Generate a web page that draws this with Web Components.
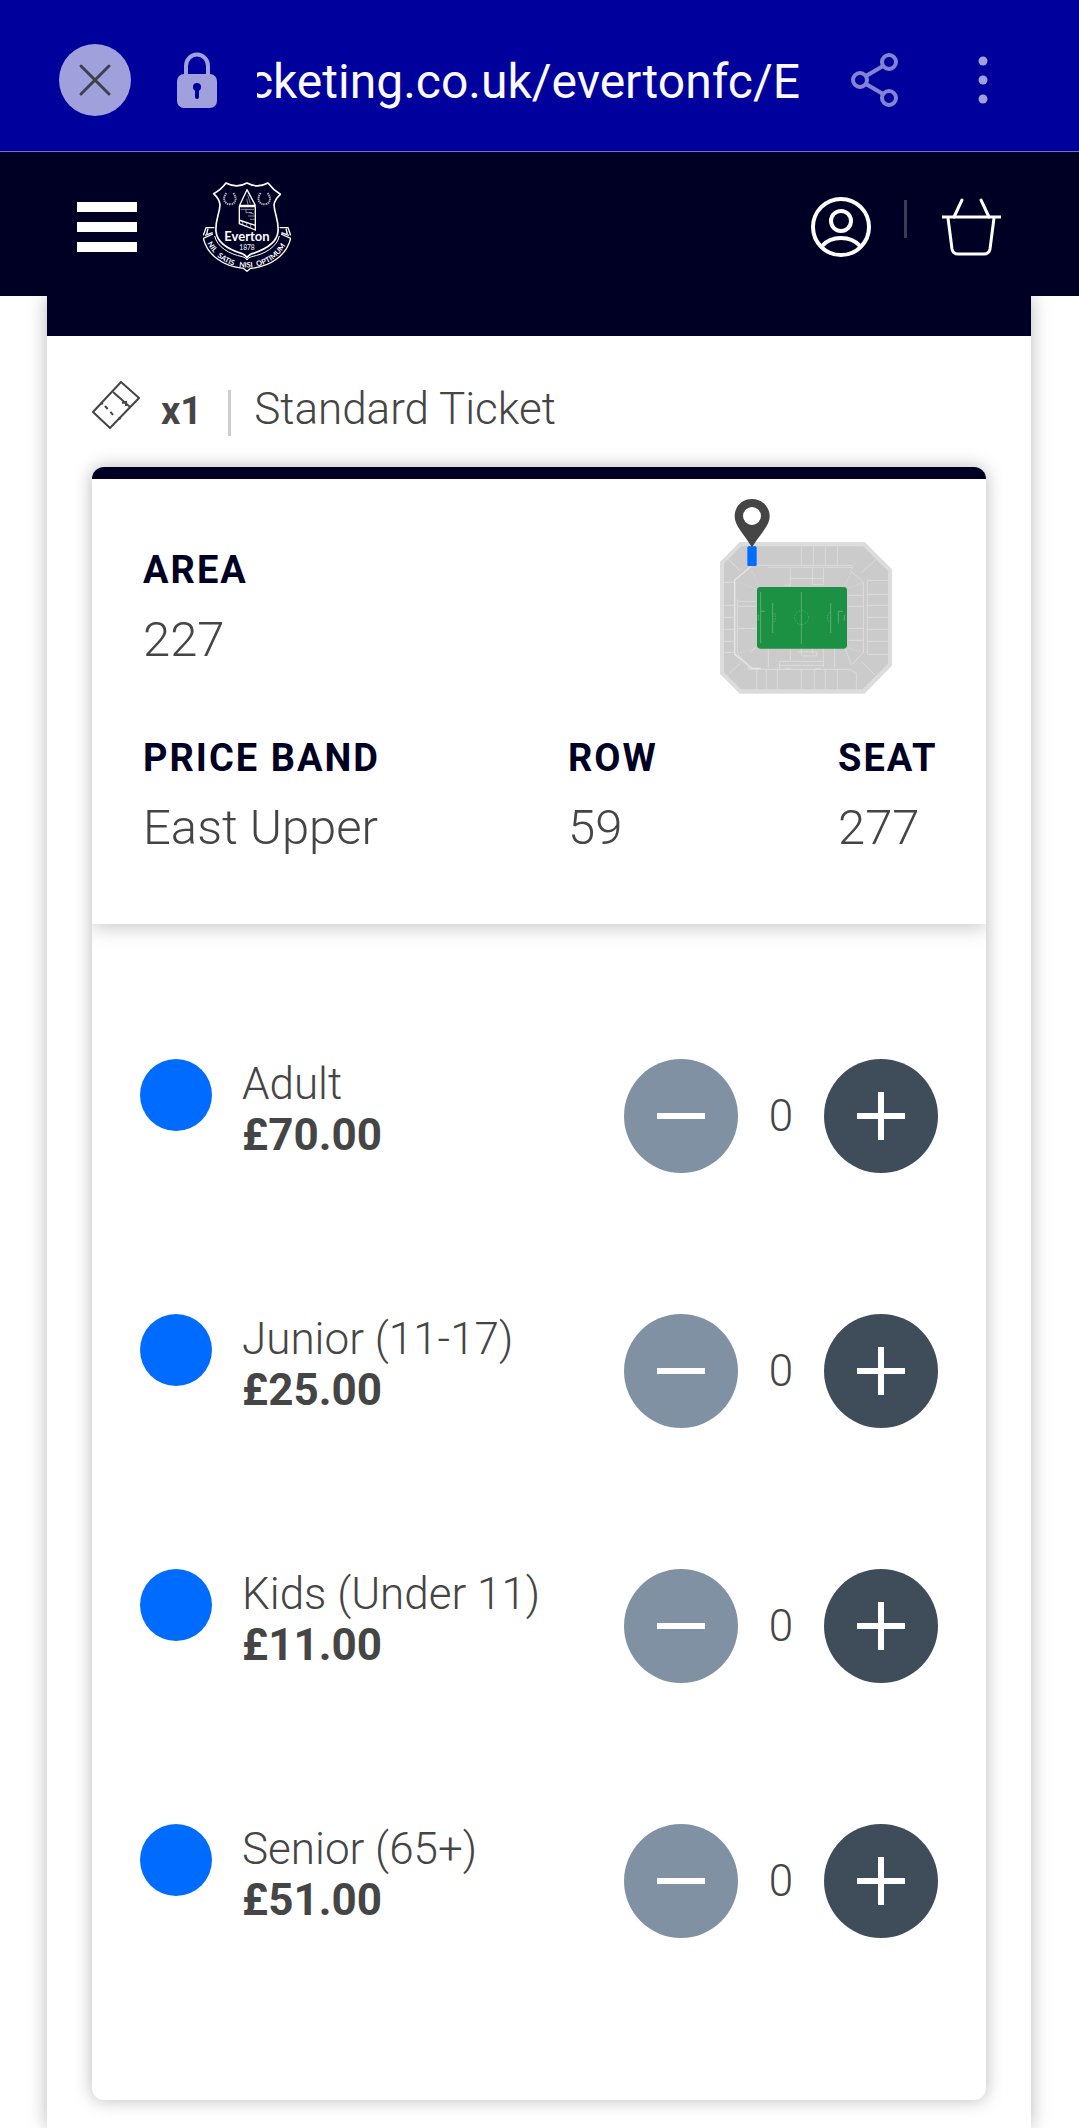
<!DOCTYPE html>
<html lang="en">
<head>
<meta charset="utf-8">
<meta name="viewport" content="width=device-width, initial-scale=1">
<title>Everton Ticketing</title>
<style>
  body {
    margin: 0;
    background: #fff;
    color: #454545;
    font-family: Roboto, "Liberation Sans", sans-serif;
    font-weight: 300;
    --navy: #000024;
    --bar: #00009c;
    --blue: #006cff;
    --shadow: 0 0 18px rgba(0, 0, 0, 0.28);
  }
</style>
</head>
<body>
<browser-bar>cketing.co.uk/evertonfc/E</browser-bar>
<site-header></site-header>
<ticket-panel count="x1" name="Standard Ticket">
  <ticket-card>
    <seat-field slot="info" label="AREA">227</seat-field>
    <stadium-map slot="info"></stadium-map>
    <seat-field slot="info" label="PRICE BAND">East Upper</seat-field>
    <seat-field slot="info" label="ROW">59</seat-field>
    <seat-field slot="info" label="SEAT">277</seat-field>
    <price-row name="Adult" price="£70.00"></price-row>
    <price-row name="Junior (11-17)" price="£25.00"></price-row>
    <price-row name="Kids (Under 11)" price="£11.00"></price-row>
    <price-row name="Senior (65+)" price="£51.00"></price-row>
  </ticket-card>
</ticket-panel>

<script>
class BrowserBar extends HTMLElement {
  constructor() {
    super();
    this.shadow = this.attachShadow({ mode: "open" });
  }

  connectedCallback() {
    this.shadow.innerHTML = `
      <style>
        :host {
          display: flex;
          align-items: center;
          box-sizing: border-box;
          height: 152px;
          padding: 8px 84px 0 59px;
          background: var(--bar);
          border-bottom: 1px solid #7373bf;
          color: #fafaff;
          font-size: 48px;
          font-weight: 400;
        }
        button {
          display: flex;
          padding: 0;
          border: 0;
          background: none;
        }
        .lock { margin: 0 40px 0 46px; }
        .url {
          flex: 1;
          display: flex;
          justify-content: flex-end;
          padding-top: 4px;
          overflow: hidden;
          white-space: nowrap;
        }
        .share { margin: 0 72px 0 51px; }
      </style>
      <button aria-label="Close">
        <svg width="72" height="72" viewBox="0 0 72 72">
          <circle cx="36" cy="36" r="36" fill="#a0a0dd"/>
          <path d="M22 22l28 28M50 22L22 50" stroke="#40404c" stroke-width="3" stroke-linecap="round"/>
        </svg>
      </button>
      <svg class="lock" width="40" height="56" viewBox="0 0 40 56">
        <path d="M9 26V14a11 11.500 0 0 1 22 0v12" fill="none" stroke="#a0a0dd" stroke-width="4"/>
        <rect y="22" width="40" height="34" rx="7" fill="#a0a0dd"/>
        <circle cx="20" cy="35" r="4" fill="var(--bar)"/>
        <rect x="18" y="35" width="4" height="12" rx="2" fill="var(--bar)"/>
      </svg>
      <div class="url"><span><slot></slot></span></div>
      <button class="share" aria-label="Share">
        <svg width="48" height="54" viewBox="0 0 48 54" fill="none" stroke="#8383d3" stroke-width="4">
          <circle cx="9" cy="27" r="7"/>
          <circle cx="38" cy="9" r="7"/>
          <circle cx="38" cy="45" r="7"/>
          <path d="M15 23l17-10M15 31l17 10"/>
        </svg>
      </button>
      <button aria-label="More">
        <svg width="24" height="48" viewBox="0 0 24 48" fill="#a0a0dd">
          <circle cx="12" cy="5" r="4.500"/>
          <circle cx="12" cy="24" r="4.500"/>
          <circle cx="12" cy="43" r="4.500"/>
        </svg>
      </button>
    `;
  }
}
customElements.define("browser-bar", BrowserBar);

class ClubCrest extends HTMLElement {
  constructor() {
    super();
    this.shadow = this.attachShadow({ mode: "open" });
  }

  connectedCallback() {
    this.shadow.innerHTML = `
      <style>
        :host { display: block; }
        svg { display: block; }
      </style>
      <svg width="88" height="90" viewBox="69 66 264 270" fill="none" stroke="#fff" stroke-width="5" stroke-linejoin="round">
        <path d="M138 69Q170 86 201 69Q232 86 264 69Q280 90 301 103Q283 120 282 135C284 165 297 180 294 215C290 255 245 272 216 281Q206 284 201 294Q196 284 186 281C157 272 112 255 108 215C105 180 118 165 120 135Q119 118 101 101Q122 90 138 69Z"/>
        <path d="M104 228C112 262 148 282 187 290Q197 292 201 300Q205 292 215 290C254 282 290 262 298 228" stroke-width="3"/>
        <path d="M99 222L70 235C82 284 128 320 190 325L201 334L212 325C274 320 320 284 332 235L303 222" stroke-width="4"/>
        <path d="M70 226L78 203L103 203M75 226L98 218M84 206L80 222M332 226L324 203L299 203M327 226L304 218M318 206L322 222" stroke-width="4"/>
        <path d="M139 99c-14 18-4 34 12 34M160 99c14 18 4 34-8 34M242 99c-14 18-4 34 12 34M263 99c14 18 4 34-8 34" stroke-width="6" stroke-dasharray="4 2" opacity="0.7"/>
        <path d="M201 89L179 136H226ZM176 140H227M178 140V190M226 140V212M176 180L226 196M176 190L226 210" stroke-width="4"/>
        <path d="M203 104l8 26M200 116l4 18M182 148h40M198 148v10h18M204 168h20M210 178h14M188 184v10M200 188v10M212 192v12M208 158l14 4" stroke-width="2" opacity="0.8"/>
        <g fill="#fff" stroke="none" text-anchor="middle" font-family="Lato, sans-serif" font-weight="700" font-size="22">
          <text x="201" y="243" font-size="39">Everton</text>
          <text x="201" y="271" font-weight="400" font-size="20">1878</text>
          <path id="arc" d="M78 240A131 126 0 0 0 324 240" fill="none"/>
          <text><textPath href="#arc" startOffset="9%">NIL</textPath></text>
          <text><textPath href="#arc" startOffset="28%">SATIS</textPath></text>
          <text><textPath href="#arc" startOffset="49%">NISI</textPath></text>
          <text><textPath href="#arc" startOffset="77%">OPTIMUM</textPath></text>
        </g>
      </svg>
    `;
  }
}
customElements.define("club-crest", ClubCrest);

class SiteHeader extends HTMLElement {
  constructor() {
    super();
    this.shadow = this.attachShadow({ mode: "open" });
  }

  connectedCallback() {
    this.shadow.innerHTML = `
      <style>
        :host {
          display: flex;
          align-items: center;
          position: relative;
          z-index: 1;
          height: 144px;
          padding: 0 77px;
          background: var(--navy);
        }
        button, a {
          display: flex;
          padding: 0;
          border: 0;
          background: none;
        }
        .menu {
          flex-direction: column;
          gap: 10px;
          margin: 6px 66px 0 0;
        }
        .menu span {
          width: 60px;
          height: 10px;
          background: #fff;
        }
        .account { margin: 6px 33px 0 auto; }
        .divider {
          width: 3px;
          height: 38px;
          margin: 0 35px 10px 0;
          background: #3b3b58;
        }
        .crest, .basket { margin-top: 6px; }
      </style>
      <button class="menu" aria-label="Menu"><span></span><span></span><span></span></button>
      <a class="crest" href="#" aria-label="Everton home"><club-crest></club-crest></a>
      <a class="account" href="#" aria-label="Account">
        <svg width="60" height="60" viewBox="0 0 60 60" fill="none" stroke="#fff" stroke-width="4">
          <circle cx="30" cy="30" r="28"/>
          <circle cx="30" cy="24" r="10"/>
          <path d="M11 49Q18 41 30 41Q42 41 49 49"/>
        </svg>
      </a>
      <span class="divider"></span>
      <a class="basket" href="#" aria-label="Basket">
        <svg width="60" height="58" viewBox="0 0 60 58" fill="none" stroke="#fff" stroke-width="3">
          <path d="M0 19H59"/>
          <path d="M12 19L20 2M47 19L39 2" stroke-linecap="round"/>
          <path d="M6 20L10 51Q11 56 16 56H42Q47 56 48 51L52 20"/>
        </svg>
      </a>
    `;
  }
}
customElements.define("site-header", SiteHeader);

class TicketPanel extends HTMLElement {
  constructor() {
    super();
    this.shadow = this.attachShadow({ mode: "open" });
  }

  connectedCallback() {
    let count = this.getAttribute("count");
    let name = this.getAttribute("name");

    this.shadow.innerHTML = `
      <style>
        :host {
          display: block;
          margin: 0 48px 0 47px;
          padding: 0 45px 28px;
          border-top: 40px solid var(--navy);
          background: #fff;
          box-shadow: var(--shadow);
        }
        .summary {
          display: flex;
          align-items: center;
          height: 55px;
          padding: 45px 0 31px;
          font-size: 44px;
          line-height: 60px;
        }
        svg {
          align-self: flex-start;
          margin-right: 21px;
        }
        b {
          padding-top: 4px;
          font-size: 38px;
          font-weight: 700;
        }
        i {
          align-self: flex-end;
          width: 3px;
          height: 46px;
          margin: 0 23px 0 26px;
          background: #ccc;
        }
      </style>
      <div class="summary">
        <svg width="48" height="48" viewBox="0 0 48 48" fill="none" stroke="#454545" stroke-width="2">
          <path d="M29 1L47 17L18 47L1 31Z"/>
          <path d="M21 11L38 26"/>
          <path d="M13 25l10 11" stroke-dasharray="4 4"/>
          <path d="M9 23l2-1M30 22l4-1v4M26 38l3-1"/>
        </svg>
        <b>${count}</b>
        <i></i>
        <span>${name}</span>
      </div>
      <slot></slot>
    `;
  }
}
customElements.define("ticket-panel", TicketPanel);

class TicketCard extends HTMLElement {
  constructor() {
    super();
    this.shadow = this.attachShadow({ mode: "open" });
  }

  connectedCallback() {
    this.shadow.innerHTML = `
      <style>
        :host {
          display: block;
          overflow: hidden;
          border-top: 12px solid var(--navy);
          border-radius: 12px;
          background: #fff;
          box-shadow: var(--shadow);
        }
        .info {
          display: grid;
          grid-template-columns: 425fr 270fr 99fr;
          row-gap: 33px;
          padding: 20px 49px 57px 51px;
          box-shadow: 0 2px 20px rgba(0, 0, 0, 0.25);
        }
        .prices {
          display: flex;
          flex-direction: column;
          gap: 141px;
          padding: 135px 48px 162px;
        }
      </style>
      <div class="info"><slot name="info"></slot></div>
      <div class="prices"><slot></slot></div>
    `;
  }
}
customElements.define("ticket-card", TicketCard);

class SeatField extends HTMLElement {
  constructor() {
    super();
    this.shadow = this.attachShadow({ mode: "open" });
  }

  connectedCallback() {
    let label = this.getAttribute("label");

    this.shadow.innerHTML = `
      <style>
        :host {
          display: block;
          min-width: 0;
          white-space: nowrap;
        }
        :host([label="AREA"]) { padding-top: 40px; }
        dl, dd { margin: 0; }
        dt {
          color: var(--navy);
          font-size: 38px;
          font-weight: 700;
          line-height: 62px;
          letter-spacing: 2px;
        }
        dd {
          font-size: 49px;
          line-height: 78px;
        }
      </style>
      <dl>
        <dt>${label}</dt>
        <dd><slot></slot></dd>
      </dl>
    `;
  }
}
customElements.define("seat-field", SeatField);

class StadiumMap extends HTMLElement {
  constructor() {
    super();
    this.shadow = this.attachShadow({ mode: "open" });
  }

  connectedCallback() {
    this.shadow.innerHTML = `
      <style>
        :host {
          display: block;
          grid-column: 2 / 4;
          justify-self: end;
          margin-right: 45px;
        }
        svg { display: block; }
      </style>
      <svg width="172" height="195" viewBox="90 57 516 585" role="img" aria-label="Seat location" fill="none">
        <path d="M149 186H524L606 268V557L524 641H149L90 582V246Z" fill="#dcdcdc"/>
        <path d="M153 199H519L594 274V552L517 628H153L102 577V251Z" fill="#cbcbcb"/>
        <g stroke="#dcdcdc" stroke-width="3">
          <path d="M200 256H487M334 199V256M370 199V256M406 199V256M442 199V256M235 262H487"/>
          <path d="M102 307H133M102 376H133M102 412H133M102 448H133M102 484H133M102 517H133"/>
          <path d="M532 301H594M532 343H594M532 376H594M532 412H594M532 448H594M532 484H594M532 523H594M532 301V523"/>
          <path d="M200 568V628M229 568V628M262 568V628M334 568V628M373 568V628M406 568V628M442 568V628M499 578V628"/>
          <path d="M115 238L152 274M514 279L556 240M118 580L154 547M514 545L556 586"/>
          <path d="M142 358V520M142 364H200M142 379H200M142 445H200M475 346H520M475 379H520M475 445H520M475 481H520"/>
          <path d="M301 262V319M301 295H400M367 262V313H400V262M283 316H301M235 505V562M268 544H400V562M268 556H400M268 544V568M301 505V540M367 505V520M400 505V544M433 505V562"/>
          <path d="M320 516H380V528H335M334 505V525M285 566H303M375 566H393"/>
          <path d="M481 272L520 307V517L484 555L466 508"/>
        </g>
        <path d="M184 259L134 300V523L186 565H212" stroke="#e6e6e6" stroke-width="4"/>
        <path d="M142 522L176 555V568H480L497 580M181 517L197 502" stroke="#dedede" stroke-width="3"/>
        <path d="M185 268L206 319M142 305L200 328M142 520L200 505M495 248L463 320M520 308L472 325M520 518L472 503" stroke="#dedede" stroke-width="2" stroke-dasharray="5 4"/>
        <rect x="201" y="321" width="270" height="185" rx="10" fill="#1c9143"/>
        <g stroke="#5aae72" stroke-width="3">
          <path d="M334 336V492M248 369V459M422 369V459M212 336V490M212 394H224M205 405V422M458 394H445V431M463 405V422"/>
          <circle cx="335" cy="413" r="21" stroke-dasharray="3 6"/>
          <path d="M253 399Q260 413 253 427M418 397Q407 413 418 429" stroke-dasharray="4 4"/>
        </g>
        <rect x="172" y="199" width="28" height="59" rx="4" fill="#006cff"/>
        <path d="M186 57C155 57 134 80 134 109C134 137 161 162 186 202C211 162 239 137 239 109C239 80 216 57 186 57ZM186 81A27 27 0 1 1 186 135A27 27 0 1 1 186 81Z" fill="#454545" fill-rule="evenodd"/>
      </svg>
    `;
  }
}
customElements.define("stadium-map", StadiumMap);

class PriceRow extends HTMLElement {
  constructor() {
    super();
    this.shadow = this.attachShadow({ mode: "open" });
    this.count = 0;
  }

  connectedCallback() {
    let name = this.getAttribute("name");
    let price = this.getAttribute("price");

    this.shadow.innerHTML = `
      <style>
        :host {
          display: flex;
          align-items: flex-start;
          height: 114px;
          font-size: 44px;
          line-height: 51px;
        }
        .dot {
          width: 72px;
          height: 72px;
          margin-right: 30px;
          border-radius: 50%;
          background: var(--blue);
        }
        .text {
          flex: 1;
          white-space: nowrap;
        }
        .text span, b { display: block; }
        b { font-weight: 700; }
        .stepper {
          display: flex;
          align-items: center;
        }
        button {
          display: flex;
          width: 114px;
          height: 114px;
          padding: 33px;
          border: 0;
          border-radius: 50%;
          background: #3f4d5a;
        }
        button:disabled { background: #8091a3; }
        output {
          width: 86px;
          text-align: center;
        }
      </style>
      <span class="dot"></span>
      <div class="text" id="label"><span>${name}</span><b>${price}</b></div>
      <div class="stepper" role="group" aria-labelledby="label">
        <button class="minus" aria-label="Remove" disabled>
          <svg width="48" height="48" viewBox="0 0 48 48"><path d="M0 24H48" stroke="#fff" stroke-width="6"/></svg>
        </button>
        <output>0</output>
        <button class="plus" aria-label="Add">
          <svg width="48" height="48" viewBox="0 0 48 48"><path d="M0 24H48M24 0V48" stroke="#fff" stroke-width="6"/></svg>
        </button>
      </div>
    `;

    this.shadow.querySelector(".minus").addEventListener("click", () => this.change(-1));
    this.shadow.querySelector(".plus").addEventListener("click", () => this.change(1));
  }

  change(step) {
    this.count = Math.max(0, this.count + step);
    this.shadow.querySelector("output").textContent = this.count;
    this.shadow.querySelector(".minus").disabled = this.count === 0;
  }
}
customElements.define("price-row", PriceRow);
</script>
</body>
</html>
